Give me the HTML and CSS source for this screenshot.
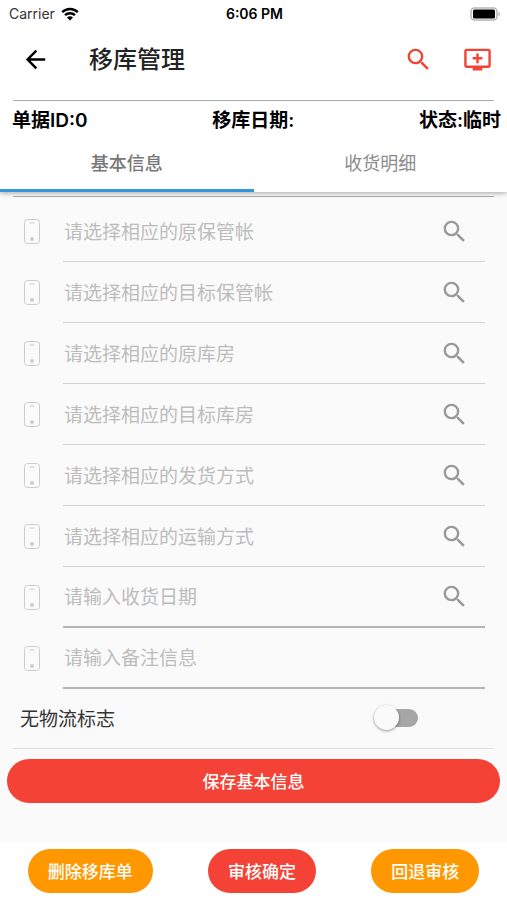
FILE: index.html
```html
<!DOCTYPE html>
<html lang="zh-CN">
<head>
    <meta charset="UTF-8">
    <meta name="viewport" content="width=device-width, initial-scale=1.0">
    <title>移库管理</title>
    <link rel="stylesheet" href="styles.css">
</head>
<body>
    <!-- shared icons -->
    <svg class="sprite" aria-hidden="true">
        <symbol id="icon-search" viewBox="0 0 24 24">
            <path d="M15.5 14h-.79l-.28-.27A6.471 6.471 0 0 0 16 9.5 6.5 6.5 0 1 0 9.5 16c1.61 0 3.09-.59 4.23-1.57l.27.28v.79l5 4.99L20.49 19l-4.99-5zm-6 0C7.01 14 5 11.99 5 9.5S7.01 5 9.5 5 14 7.01 14 9.5 11.99 14 9.5 14z"/>
        </symbol>
        <symbol id="icon-phone" viewBox="0 0 16 25">
            <rect x="0.5" y="0.5" width="15" height="24" rx="3" fill="none" stroke="currentColor"/>
            <path d="M5.5 4h5" fill="none" stroke="currentColor"/>
            <circle cx="8" cy="20" r="2"/>
        </symbol>
    </svg>

    <header class="header">
        <div class="status-bar">
            <div class="carrier">
                <span>Carrier</span>
                <svg class="wifi" viewBox="0 0 18 14">
                    <path d="M1.2 5.2a11.2 11.2 0 0 1 15.6 0M4 8.2a7.2 7.2 0 0 1 10 0" fill="none" stroke="currentColor" stroke-width="2.4"/>
                    <path d="M9 13.6l-3-3a4.3 4.3 0 0 1 6 0z"/>
                </svg>
            </div>
            <div class="time">6:06 PM</div>
            <svg class="battery" viewBox="0 0 30 14">
                <rect x="1" y="1" width="26" height="12" rx="3.5" fill="#fff" stroke="#b5b5b5" stroke-width="1.5"/>
                <rect x="3" y="2.5" width="22" height="9" rx="1.5"/>
                <path d="M28.5 5c2 .8 2 3.2 0 4z" fill="#b5b5b5"/>
            </svg>
        </div>

        <div class="app-bar">
            <button class="icon-button" type="button" aria-label="返回">
                <svg class="icon" viewBox="0 0 24 24"><path d="M20 11H7.83l5.59-5.59L12 4l-8 8 8 8 1.41-1.41L7.83 13H20z"/></svg>
            </button>
            <h1>移库管理</h1>
            <div class="actions">
                <button class="icon-button" type="button" aria-label="搜索">
                    <svg class="icon"><use href="#icon-search"/></svg>
                </button>
                <button class="icon-button" type="button" aria-label="新增">
                    <svg class="icon" viewBox="0 0 24 24"><path d="M21 3H3c-1.11 0-2 .89-2 2v12c0 1.1.89 2 2 2h5v2h8v-2h5c1.1 0 1.99-.9 1.99-2L23 5c0-1.11-.9-2-2-2zm0 14H3V5h18v12zm-5-7v2h-3v3h-2v-3H8v-2h3V7h2v3h3z"/></svg>
                </button>
            </div>
        </div>

        <hr class="divider">

        <div class="summary">
            <span>单据ID:0</span>
            <span>移库日期:</span>
            <span>状态:临时</span>
        </div>

        <div class="tabs" role="tablist">
            <button class="tab active" type="button" role="tab" aria-selected="true">基本信息</button>
            <button class="tab" type="button" role="tab" aria-selected="false">收货明细</button>
        </div>
    </header>

    <main class="content">
        <hr class="divider">

        <form class="form">
            <div class="field">
                <label for="from-account" aria-label="原保管帐"><svg class="phone"><use href="#icon-phone"/></svg></label>
                <div class="field-box">
                    <input type="text" id="from-account" placeholder="请选择相应的原保管帐">
                    <button class="icon-button" type="button" aria-label="选择原保管帐"><svg class="icon"><use href="#icon-search"/></svg></button>
                </div>
            </div>
            <div class="field">
                <label for="to-account" aria-label="目标保管帐"><svg class="phone"><use href="#icon-phone"/></svg></label>
                <div class="field-box">
                    <input type="text" id="to-account" placeholder="请选择相应的目标保管帐">
                    <button class="icon-button" type="button" aria-label="选择目标保管帐"><svg class="icon"><use href="#icon-search"/></svg></button>
                </div>
            </div>
            <div class="field">
                <label for="from-store" aria-label="原库房"><svg class="phone"><use href="#icon-phone"/></svg></label>
                <div class="field-box">
                    <input type="text" id="from-store" placeholder="请选择相应的原库房">
                    <button class="icon-button" type="button" aria-label="选择原库房"><svg class="icon"><use href="#icon-search"/></svg></button>
                </div>
            </div>
            <div class="field">
                <label for="to-store" aria-label="目标库房"><svg class="phone"><use href="#icon-phone"/></svg></label>
                <div class="field-box">
                    <input type="text" id="to-store" placeholder="请选择相应的目标库房">
                    <button class="icon-button" type="button" aria-label="选择目标库房"><svg class="icon"><use href="#icon-search"/></svg></button>
                </div>
            </div>
            <div class="field">
                <label for="delivery" aria-label="发货方式"><svg class="phone"><use href="#icon-phone"/></svg></label>
                <div class="field-box">
                    <input type="text" id="delivery" placeholder="请选择相应的发货方式">
                    <button class="icon-button" type="button" aria-label="选择发货方式"><svg class="icon"><use href="#icon-search"/></svg></button>
                </div>
            </div>
            <div class="field">
                <label for="transport" aria-label="运输方式"><svg class="phone"><use href="#icon-phone"/></svg></label>
                <div class="field-box">
                    <input type="text" id="transport" placeholder="请选择相应的运输方式">
                    <button class="icon-button" type="button" aria-label="选择运输方式"><svg class="icon"><use href="#icon-search"/></svg></button>
                </div>
            </div>
            <div class="field editable">
                <label for="receive-date" aria-label="收货日期"><svg class="phone"><use href="#icon-phone"/></svg></label>
                <div class="field-box">
                    <input type="text" id="receive-date" placeholder="请输入收货日期">
                    <button class="icon-button" type="button" aria-label="选择收货日期"><svg class="icon"><use href="#icon-search"/></svg></button>
                </div>
            </div>
            <div class="field editable">
                <label for="remark" aria-label="备注信息"><svg class="phone"><use href="#icon-phone"/></svg></label>
                <div class="field-box">
                    <input type="text" id="remark" placeholder="请输入备注信息">
                </div>
            </div>

            <div class="switch-row">
                <label for="no-logistics">无物流标志</label>
                <input class="switch" type="checkbox" role="switch" id="no-logistics">
            </div>

            <hr class="divider light">

            <button class="button save" type="button">保存基本信息</button>
        </form>
    </main>

    <footer class="bottom-bar">
        <button class="button warning" type="button">删除移库单</button>
        <button class="button" type="button">审核确定</button>
        <button class="button warning" type="button">回退审核</button>
    </footer>
</body>
</html>
```

FILE: styles.css
```css
:root {
    --red: #f44336;
    --orange: #ff9800;
    --blue: #3494dc;
    --page-bg: #fafafa;
    --hint: #bcbcbc;
    --line: #d2d2d2;
    --line-dark: #b4b4b4;
}

* {
    box-sizing: border-box;
}

body {
    margin: 0;
    min-height: 100vh;
    display: flex;
    flex-direction: column;
    background-color: var(--page-bg);
    font-family: Inter, "Noto Sans CJK SC", sans-serif;
    color: #000;
}

button,
input {
    font-family: inherit;
}

svg {
    display: block;
    fill: currentColor;
}

.sprite {
    position: absolute;
    width: 0;
    height: 0;
}

.header {
    background-color: #fff;
    box-shadow: 0 1px 5px rgba(0, 0, 0, 0.35);
}

.status-bar {
    display: grid;
    grid-template-columns: 1fr auto 1fr;
    align-items: center;
    height: 27px;
    padding: 0 7px 0 9px;
    font-size: 14px;
}

.carrier {
    display: flex;
    align-items: center;
    gap: 6px;
    color: #333;
}

.wifi {
    width: 18px;
    height: 14px;
    color: #000;
}

.time {
    font-weight: 600;
}

.battery {
    width: 30px;
    height: 14px;
    justify-self: end;
}

.app-bar {
    display: flex;
    align-items: center;
    height: 73px;
    padding: 0 15px 8px 21px;
}

.app-bar h1 {
    flex: 1;
    margin: 0 0 0 39px;
    font-size: 24px;
    font-weight: 500;
    line-height: 32px;
    color: #222;
}

.icon-button {
    padding: 0;
    border: none;
    background: none;
    color: inherit;
    cursor: pointer;
}

.icon {
    width: 29px;
    height: 29px;
}

.actions {
    display: flex;
    gap: 30px;
    color: var(--red);
}

.divider {
    height: 1px;
    margin: 0 13px;
    border: none;
    background-color: #aaa;
}

.divider.light {
    background-color: #e0e0e0;
}

.summary {
    display: flex;
    justify-content: space-between;
    padding: 5px 6px 0 12px;
    font-size: 19px;
    font-weight: 600;
    line-height: 30px;
}

.tabs {
    display: flex;
}

.tab {
    flex: 1;
    height: 56px;
    padding: 0 0 2px;
    border: none;
    border-bottom: 3px solid transparent;
    background: none;
    font-size: 18px;
    color: #8c8c8c;
    cursor: pointer;
}

.tab.active {
    border-bottom-color: var(--blue);
    font-weight: 500;
    color: #777;
}

.content {
    flex: 1;
    padding-top: 4px;
}

.form {
    padding-top: 4px;
}

.field {
    display: flex;
    align-items: center;
    padding: 0 22px 0 24px;
}

.phone {
    width: 16px;
    height: 25px;
    color: #ccc;
}

.field-box {
    flex: 1;
    display: flex;
    align-items: center;
    height: 61px;
    margin-left: 23px;
    padding-right: 16px;
    border-bottom: 1px solid var(--line);
    color: #999;
}

.field.editable .field-box {
    border-bottom: 2px solid var(--line-dark);
}

.field input {
    flex: 1;
    min-width: 0;
    height: 44px;
    padding: 2px 0 0 1px;
    border: none;
    outline: none;
    background: none;
    font-size: 19px;
    color: #333;
}

.field input::placeholder {
    color: var(--hint);
    opacity: 1;
}

.switch-row {
    display: flex;
    align-items: center;
    justify-content: space-between;
    height: 59px;
    padding: 0 89px 2px 20px;
    font-size: 19px;
    color: #333;
}

.switch {
    appearance: none;
    display: flex;
    align-items: center;
    width: 42px;
    height: 18px;
    margin: 0;
    border-radius: 9px;
    background-color: #a6a6a6;
    cursor: pointer;
}

.switch::before {
    content: "";
    width: 25px;
    height: 25px;
    margin-left: -2px;
    flex-shrink: 0;
    border-radius: 50%;
    background-color: #fafafa;
    box-shadow: 0 1px 3px rgba(0, 0, 0, 0.4);
}

.switch:checked {
    background-color: var(--blue);
}

.switch:checked::before {
    margin-left: 20px;
}

.button {
    height: 44px;
    padding: 0 20px 2px;
    border: none;
    border-radius: 22px;
    background-color: var(--red);
    color: #fff;
    font-size: 17px;
    font-weight: 500;
    cursor: pointer;
}

.button.warning {
    background-color: var(--orange);
}

.button.save {
    display: block;
    width: calc(100% - 14px);
    margin: 10px 7px;
}

.bottom-bar {
    display: flex;
    align-items: center;
    justify-content: space-around;
    height: 58px;
    background-color: #fff;
}
```
